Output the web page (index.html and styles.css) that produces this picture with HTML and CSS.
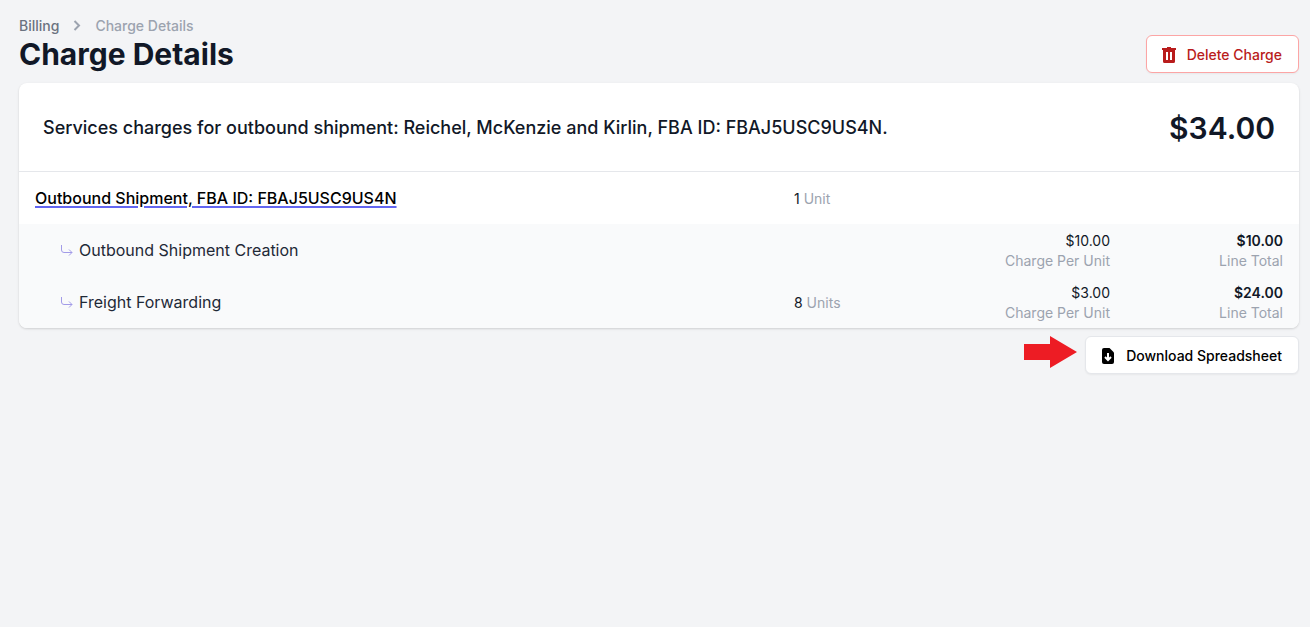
FILE: index.html
```html
<!DOCTYPE html>
<html lang="en">
  <head>
    <meta charset="utf-8">
    <meta name="viewport" content="width=device-width, initial-scale=1">
    <title>Charge Details</title>
    <link rel="stylesheet" href="styles.css">
  </head>
  <body>
    <svg class="sprite" aria-hidden="true">
      <symbol id="icon-sub-item" viewBox="0 0 12 12">
        <path d="M0.5 1V6Q0.5 8.5 3 8.5H11M8 5.5L11 8.5L8 11.5" fill="none" stroke="currentColor" />
      </symbol>
    </svg>
    <main>
      <nav class="breadcrumb" aria-label="Breadcrumb">
        <a href="#billing">Billing</a>
        <svg class="chevron" viewBox="0 0 8 12" aria-hidden="true">
          <path d="M1.5 1L6 5.5L1.5 10" fill="none" stroke="currentColor" stroke-width="2" />
        </svg>
        <span>Charge Details</span>
      </nav>
      <header class="page-header">
        <h1>Charge Details</h1>
        <button type="button" class="button button-danger">
          <svg class="icon" viewBox="0 0 16 16" aria-hidden="true">
            <path fill="currentColor" fill-rule="evenodd" d="M6 0H10V1H15V3H14V14.5Q14 16 12.5 16H3.5Q2 16 2 14.5V3H1V1H6ZM5 5V13H7V5ZM9 5V13H11V5Z" />
          </svg>
          Delete Charge
        </button>
      </header>

      <section class="card">
        <div class="card-header">
          <h2>Services charges for outbound shipment: Reichel, McKenzie and Kirlin, FBA ID: FBAJ5USC9US4N.</h2>
          <span class="amount">$34.00</span>
        </div>
        <table class="charges">
          <colgroup>
            <col class="col-item">
            <col class="col-quantity">
            <col class="col-price">
            <col class="col-total">
          </colgroup>
          <tbody>
            <tr>
              <td><a href="#shipment" class="item-link">Outbound Shipment, FBA ID: FBAJ5USC9US4N</a></td>
              <td class="quantity">1 <span class="muted">Unit</span></td>
              <td></td>
              <td></td>
            </tr>
            <tr class="sub-row">
              <td>
                <div class="sub-item">
                  <svg class="sub-icon" aria-hidden="true"><use href="#icon-sub-item" /></svg>
                  Outbound Shipment Creation
                </div>
              </td>
              <td></td>
              <td class="price">$10.00 <span class="muted">Charge Per Unit</span></td>
              <td class="price"><strong>$10.00</strong> <span class="muted">Line Total</span></td>
            </tr>
            <tr class="sub-row">
              <td>
                <div class="sub-item">
                  <svg class="sub-icon" aria-hidden="true"><use href="#icon-sub-item" /></svg>
                  Freight Forwarding
                </div>
              </td>
              <td class="quantity">8 <span class="muted">Units</span></td>
              <td class="price">$3.00 <span class="muted">Charge Per Unit</span></td>
              <td class="price"><strong>$24.00</strong> <span class="muted">Line Total</span></td>
            </tr>
          </tbody>
        </table>
      </section>

      <div class="actions">
        <svg class="pointer" viewBox="0 0 53 32" aria-hidden="true">
          <path fill="currentColor" d="M0 8H26V0L53 16L26 32V24H0Z" />
        </svg>
        <button type="button" class="button">
          <svg class="icon" viewBox="0 0 16 16" aria-hidden="true">
            <path d="M4 0H9.5L14 4.5V14Q14 16 12 16H4Q2 16 2 14V2Q2 0 4 0Z" fill="currentColor" />
            <path d="M8 5V12M5 9L8 12L11 9" fill="none" stroke="#fff" stroke-width="2" />
          </svg>
          Download Spreadsheet
        </button>
      </div>
    </main>
  </body>
</html>
```
FILE: styles.css
```css
:root {
  --background-color: #f3f4f6;
  --heading-color: #111827;
  --text-color: #1f2937;
  --link-color: #6b7280;
  --muted-color: #9ca3af;
  --border-color: #e5e7eb;
  --accent-color: #6366f1;
  --danger-color: #b91c1c;
}

*,*:before,*:after { box-sizing: border-box; }

body {
  margin: 0;
  font-family: Inter, sans-serif;
  font-size: 16px;
  line-height: 24px;
  color: var(--heading-color);
  background-color: var(--background-color);
}
main {
  padding: 16px 11px 16px 19px;
}
h1, h2 {
  margin: 0;
}
.sprite {
  display: none;
}

.breadcrumb {
  display: flex;
  align-items: center;
  gap: 14px;
  font-size: 14px;
  font-weight: 500;
  line-height: 20px;
  color: var(--muted-color);
}
.breadcrumb a {
  color: var(--link-color);
  text-decoration: none;
}
.chevron {
  width: 8px;
  height: 12px;
}

.page-header {
  display: flex;
  align-items: center;
  justify-content: space-between;
  height: 36px;
  margin-bottom: 11px;
}
.page-header h1 {
  font-size: 30px;
  font-weight: 700;
  line-height: 36px;
}

.button {
  display: inline-flex;
  align-items: center;
  gap: 10px;
  height: 38px;
  padding: 1px 16px 0 14px;
  border: 1px solid var(--border-color);
  border-radius: 6px;
  background-color: #fff;
  box-shadow: 0 1px 2px rgba(0, 0, 0, 0.05);
  font-family: inherit;
  font-size: 14px;
  font-weight: 500;
  line-height: 20px;
  color: #000;
  cursor: pointer;
}
.button-danger {
  border-color: #fca5a5;
  color: var(--danger-color);
}
.icon {
  width: 16px;
  height: 16px;
}

.card {
  border-radius: 8px;
  background-color: #fff;
  box-shadow: 0 1px 3px rgba(0, 0, 0, 0.1), 0 1px 2px rgba(0, 0, 0, 0.06);
  overflow: hidden;
}
.card-header {
  display: flex;
  align-items: center;
  justify-content: space-between;
  padding: 27px 24px 25px;
  border-bottom: 1px solid var(--border-color);
}
.card-header h2 {
  font-size: 18px;
  font-weight: 500;
  line-height: 28px;
}
.amount {
  font-size: 30px;
  font-weight: 600;
  line-height: 36px;
}

.charges {
  width: 100%;
  border-collapse: collapse;
  table-layout: fixed;
}
.col-quantity {
  width: 180px;
}
.col-price {
  width: 168px;
}
.col-total {
  width: 173px;
}
.charges td {
  height: 52px;
  padding: 6px 16px;
}
.item-link {
  font-weight: 500;
  color: #000;
  text-decoration: underline 2px var(--accent-color);
  text-underline-offset: 2px;
}
.sub-row {
  background-color: #f9fafb;
  color: var(--text-color);
}
.sub-item {
  display: flex;
  align-items: center;
  gap: 6px;
  padding-left: 26px;
}
.sub-icon {
  width: 12px;
  height: 12px;
  color: #a29be8;
}
.charges .quantity, .charges .price {
  padding: 7px 16px 5px;
  font-size: 14px;
  line-height: 20px;
  color: var(--heading-color);
}
.charges .price {
  text-align: right;
}
.price .muted {
  display: block;
}
.price strong {
  font-weight: 600;
}
.muted {
  color: var(--muted-color);
}

.actions {
  display: flex;
  align-items: flex-start;
  justify-content: flex-end;
  gap: 8px;
  margin-top: 8px;
}
.pointer {
  width: 53px;
  height: 32px;
  color: #ed1c24;
}
```
